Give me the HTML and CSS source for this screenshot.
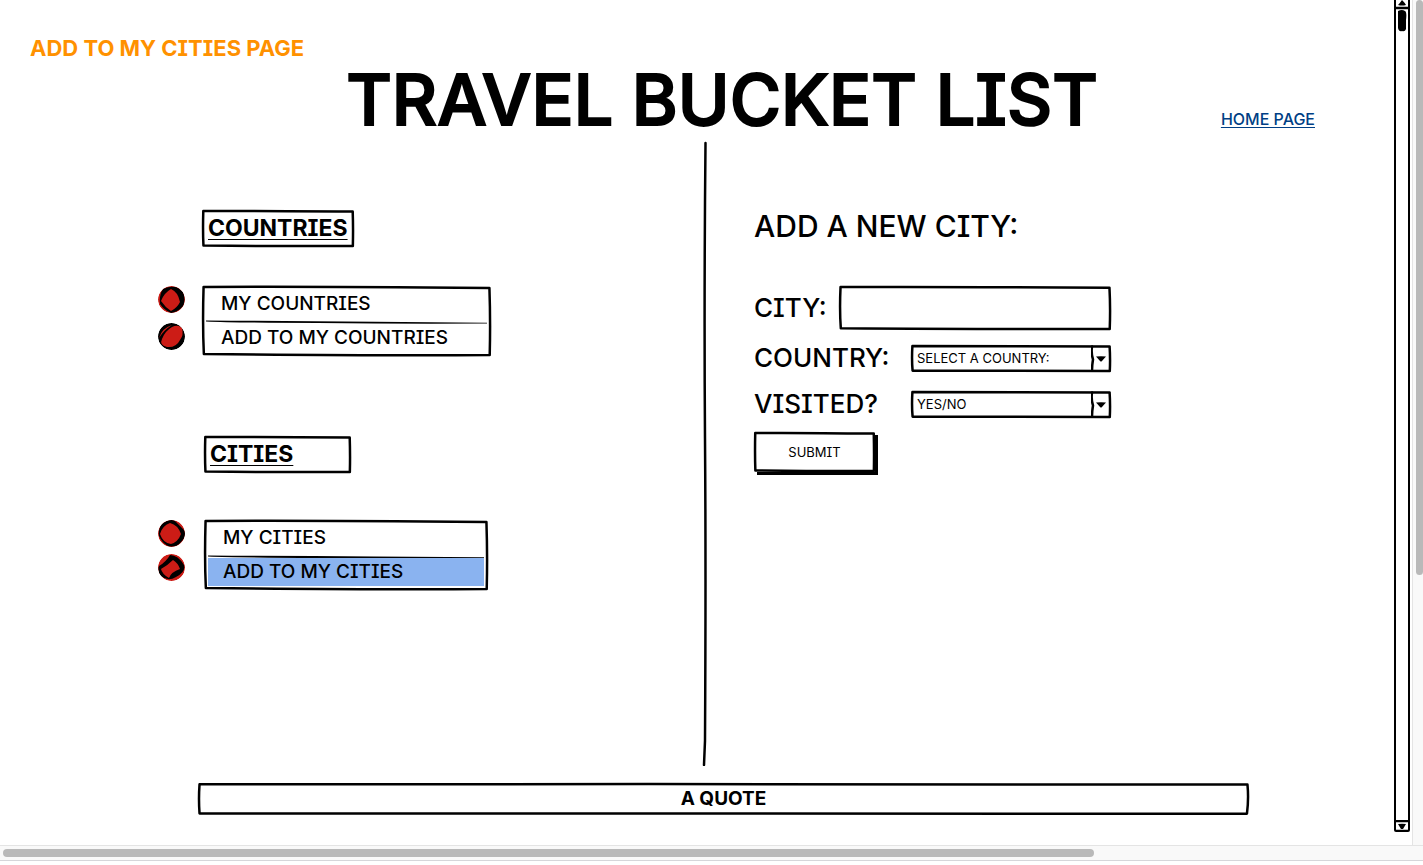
FILE: index.html
```html
<!DOCTYPE html>
<html lang="en">
<head>
<meta charset="utf-8">
<meta name="viewport" content="width=device-width, initial-scale=1">
<title>Travel Bucket List</title>
<link rel="stylesheet" href="styles.css">
</head>
<body>
<svg class="defs" aria-hidden="true">
  <symbol id="frame" viewBox="0 0 100 100" preserveAspectRatio="none" overflow="visible">
    <path class="ink" d="M0.2 0 Q35 -1 99.8 1.500 Q100.200 50 99.900 100 Q60 101 0.300 98.500 Q-0.200 55 0.200 0Z"/>
  </symbol>
  <symbol id="frame-wide" viewBox="0 0 100 100" preserveAspectRatio="none" overflow="visible">
    <path class="ink" d="M0.050 1 Q50 -1 99.950 2 Q100.080 50 99.900 99 Q50 101 0.050 98 Q-0.050 50 0.050 1Z"/>
  </symbol>
  <symbol id="drop" viewBox="0 0 20 26">
    <path class="ink" d="M1 1 Q0 8 2 14 Q1 20 1 25"/>
    <path d="M5 11 Q10 10.500 15 11 L10.500 16 L9.500 16Z"/>
  </symbol>
</svg>

<div class="viewport">
  <div class="canvas">
    <header class="header">
      <p class="page-name">ADD TO MY CITIES PAGE</p>
      <div class="title-row">
        <h1 class="title">TRAVEL BUCKET LIST</h1>
        <a class="home" href="#">HOME PAGE</a>
      </div>
    </header>

    <main class="main">
      <nav class="side">
        <section class="group">
          <h2 class="group-title sketch"><svg class="frame" aria-hidden="true"><use href="#frame"/></svg><span>COUNTRIES</span></h2>
          <div class="group-body">
            <div class="dots" aria-hidden="true">
              <svg class="dot" viewBox="0 0 27 27"><circle cx="13.500" cy="13.500" r="13.500" fill="#cc1c16"/><path fill-rule="evenodd" d="M5 3 Q14 -1 20 2 L25 6 Q28 14 25 20 Q20 26 13 27 Q6 24 2 18 Q1 9 5 3Z M13 3 Q6 7 3 15 Q7 21 13 25 Q19 22 22 16 Q20 6 13 3Z"/></svg>
              <svg class="dot" viewBox="0 0 27 27"><circle cx="13.500" cy="13.500" r="13.500"/><path fill="#cc1c16" d="M14 4 Q20 1 24 5 Q26 12 22 17 Q18 25 9 24 Q1 22 4 16 Q7 8 14 4Z M1 15 Q4 5 14 2 Q6 7 1 15Z"/></svg>
            </div>
            <ul class="menu sketch"><svg class="frame" aria-hidden="true"><use href="#frame"/></svg>
              <li><a class="item" href="#">MY COUNTRIES</a></li>
              <li class="ruled"><svg class="rule" viewBox="0 0 100 4" preserveAspectRatio="none" aria-hidden="true"><path d="M0 0.500 Q30 1 60 1.700 L100 2.800 L100 3.500 Q70 4 40 3 Q10 2.800 0 1.500Z"/></svg><a class="item" href="#">ADD TO MY COUNTRIES</a></li>
            </ul>
          </div>
        </section>

        <section class="group group-cities">
          <h2 class="group-title sketch"><svg class="frame" aria-hidden="true"><use href="#frame"/></svg><span>CITIES</span></h2>
          <div class="group-body">
            <div class="dots" aria-hidden="true">
              <svg class="dot" viewBox="0 0 27 27"><circle cx="13.500" cy="13.500" r="13.500" fill="#cc1c16"/><path fill-rule="evenodd" d="M4 4 Q12 -2 17 1 L26 10 Q29 16 23 22 Q18 28 10 26 Q4 23 1 16 Q0 9 4 4Z M12 3 Q4 6 2 14 Q5 23 13 24 Q20 22 23 14 Q20 5 12 3Z"/></svg>
              <svg class="dot" viewBox="0 0 27 27"><circle cx="13.500" cy="13.500" r="13.500" fill="#cc1c16"/><path fill-rule="evenodd" d="M12 1 Q20 1 26 11 Q28 18 18 23 Q10 28 3 22 Q-1 17 1 12 Q8 8 12 1Z M15 6 Q10 11 3 15 Q4 20 11 24 Q13 18 22 15 Q20 9 15 6Z"/></svg>
            </div>
            <ul class="menu sketch"><svg class="frame" aria-hidden="true"><use href="#frame"/></svg>
              <li><a class="item" href="#">MY CITIES</a></li>
              <li class="ruled"><svg class="rule" viewBox="0 0 100 4" preserveAspectRatio="none" aria-hidden="true"><path d="M0 1.500 Q30 2 60 2.400 L100 3.200 L100 4 L40 4 Q10 3.500 0 2.500Z"/></svg><a class="item selected" href="#" aria-current="page">ADD TO MY CITIES</a></li>
            </ul>
          </div>
        </section>
      </nav>

      <svg class="divider" viewBox="0 0 8 625" preserveAspectRatio="none" aria-hidden="true"><path class="ink" d="M4.500 7 Q3 160 4 300 Q5 430 4 600 L3 624"/></svg>

      <section class="add">
        <h2 class="add-title">ADD A NEW CITY:</h2>
        <form class="form">
          <div class="row row-city">
            <label for="city">CITY:</label>
            <div class="field sketch"><svg class="frame" aria-hidden="true"><use href="#frame"/></svg><input id="city" type="text"></div>
          </div>
          <div class="row">
            <label for="country">COUNTRY:</label>
            <div class="pick sketch"><svg class="frame" aria-hidden="true"><use href="#frame"/></svg><select id="country"><option>SELECT A COUNTRY:</option></select><svg class="arrow" aria-hidden="true"><use href="#drop"/></svg></div>
          </div>
          <div class="row">
            <label for="visited">VISITED?</label>
            <div class="pick sketch"><svg class="frame" aria-hidden="true"><use href="#frame"/></svg><select id="visited"><option>YES/NO</option><option>YES</option><option>NO</option></select><svg class="arrow" aria-hidden="true"><use href="#drop"/></svg></div>
          </div>
          <button class="submit sketch" type="button"><svg class="frame" aria-hidden="true"><use href="#frame"/></svg>SUBMIT</button>
        </form>
      </section>
    </main>

    <footer class="quote sketch"><svg class="frame" aria-hidden="true"><use href="#frame-wide"/></svg>A QUOTE</footer>
  </div>

  <div class="drawn-scroll" aria-hidden="true">
    <svg class="cap" viewBox="0 0 12 10"><path d="M2 5 Q4 3 6 0 Q9 3 10 5 Q6 6 2 5Z"/><path class="ink" d="M0 8 L12 8"/></svg>
    <svg class="knob" viewBox="0 0 12 22"><path d="M2 1 Q6 -1 9 1 Q11 2 10 10 L10 19 Q9 22 6 21 Q3 22 2 18Z"/></svg>
    <svg class="cap cap-down" viewBox="0 0 12 12"><path class="ink" d="M0 1 L12 1 M0 11 L12 11"/><path d="M2 4 Q6 3.500 10 4 L7 9 L5 9Z"/></svg>
  </div>
  <div class="v-track" aria-hidden="true"><div class="v-thumb"></div></div>
</div>
<div class="h-track" aria-hidden="true"><div class="h-thumb"></div></div>
</body>
</html>
```
FILE: styles.css
```css
* { box-sizing: border-box; }

body {
  margin: 0;
  min-height: 100vh;
  padding-bottom: 4px;
  display: flex;
  flex-direction: column;
  background: #fff;
  color: #000;
  font-family: Inter, "Open Sans", "Liberation Sans", sans-serif;
  font-weight: 500;
  font-feature-settings: "cv08" 1;
}

h1, h2, p, ul { margin: 0; padding: 0; }
ul { list-style: none; }
svg { display: block; }
.defs { position: absolute; width: 0; height: 0; }

.ink {
  fill: none;
  stroke: #000;
  stroke-width: 2.5px;
  stroke-linejoin: round;
  stroke-linecap: round;
  vector-effect: non-scaling-stroke;
}

.sketch { position: relative; }
.frame {
  position: absolute;
  inset: 1px;
  width: calc(100% - 2px);
  height: calc(100% - 2px);
  overflow: visible;
  pointer-events: none;
}

.viewport { flex: 1; display: flex; }
.canvas { flex: 1; display: flex; flex-direction: column; padding-bottom: 30px; }

.header { padding: 32px 0 0; }
.page-name {
  padding-left: 30px;
  font-size: 22px;
  line-height: 32px;
  font-weight: 700;
  color: #ff9100;
}
.title-row {
  display: grid;
  grid-template-columns: 1fr auto 1fr;
  align-items: end;
  padding-left: 50px;
}
.title {
  grid-column: 2;
  font-size: 70px;
  line-height: 72px;
  font-weight: 500;
  -webkit-text-stroke: 2px #000;
}
.home {
  justify-self: end;
  margin-right: 79px;
  padding-bottom: 7px;
  font-size: 16px;
  line-height: 20px;
  color: #003f85;
  text-underline-offset: 2px;
  text-decoration-thickness: 1px;
}

.main {
  flex: 1;
  display: grid;
  grid-template-columns: 1fr 8px 1fr;
  padding-left: 16px;
}
.divider { width: 8px; height: 100%; }

.side { padding: 74px 0 0 142px; display: flex; flex-direction: column; gap: 80px; }
.group { --indent: 44px; --box: 152px; --menu: 289px; --dot-gap: 10px; --title-gap: 39px; }
.group-cities { --indent: 46px; --box: 147px; --menu: 284px; --dot-gap: 7px; --title-gap: 47px; }
.group-title {
  width: var(--box);
  margin: 0 0 var(--title-gap) var(--indent);
  padding: 2px 6px 3px;
  font-size: 23px;
  line-height: 32px;
  font-weight: 700;
}
.group-title span {
  text-decoration: underline;
  text-decoration-thickness: 1px;
  text-underline-offset: 3px;
}
.group-body { display: grid; grid-template-columns: var(--indent) var(--menu); }
.dots { display: flex; flex-direction: column; gap: var(--dot-gap); }
.dot { width: 27px; height: 27px; border-radius: 50%; overflow: hidden; }
.menu { padding: 4px 4px 4px; }
.item {
  display: block;
  padding-left: 15px;
  font-size: 19px;
  line-height: 28px;
  color: inherit;
  text-decoration: none;
}
.ruled { padding-top: 2px; }
.rule { width: 100%; height: 4px; }
.selected { background: #8ab3f0; }

.add { padding: 70px 0 0 45px; }
.add-title { margin-bottom: 40px; font-size: 30px; line-height: 40px; font-weight: 500; }
.form { width: 357px; display: flex; flex-direction: column; align-items: stretch; gap: 10px; }
.row { display: flex; align-items: center; justify-content: space-between; height: 36px; }
.row-city { height: 44px; }
.row label { font-size: 26px; line-height: 36px; }
.field { width: 272px; height: 44px; }
.pick { width: 200px; height: 27px; }
.field input, .pick select {
  display: block;
  width: 100%;
  height: 100%;
  margin: 0;
  padding: 0 6px;
  border: 0;
  background: transparent;
  color: inherit;
  font: inherit;
  font-size: 13px;
  appearance: none;
}
.field input { font-size: 20px; }
.pick select { font-weight: 400; font-feature-settings: inherit; }
.arrow { position: absolute; right: 0; top: 0; width: 20px; height: 27px; pointer-events: none; }
.submit {
  align-self: flex-start;
  width: 121px;
  height: 40px;
  padding: 0;
  border: 0;
  background: #fff;
  box-shadow: 3px 3px 0 #000;
  color: inherit;
  font: inherit;
  font-feature-settings: inherit;
  font-size: 13px;
  font-weight: 400;
}

.quote {
  margin: 17px 145px 0 198px;
  font-size: 19px;
  line-height: 32px;
  font-weight: 700;
  text-align: center;
}

.drawn-scroll {
  width: 16px;
  margin: 0 2px 13px 0;
  display: flex;
  flex-direction: column;
  border: solid #000;
  border-width: 0 2px;
  border-radius: 0 0 2px 2px;
}
.cap { width: 100%; height: 10px; }
.knob { width: 100%; height: 22px; }
.cap-down { height: 12px; margin-top: auto; }

.v-track { width: 11px; padding-left: 3px; background: #f9f9f9; border-left: 1px solid #e4e4e4; }
.v-thumb { height: 68%; background: #b9b9b9; border-radius: 4px; }
.h-track {
  height: 16px;
  padding: 3px;
  background: #f9f9f9;
  border-top: 1px solid #e4e4e4;
  border-bottom: 1px solid #d6d6da;
}
.h-thumb { width: 77%; height: 8px; background: #b9b9b9; border-radius: 4px; }
```
